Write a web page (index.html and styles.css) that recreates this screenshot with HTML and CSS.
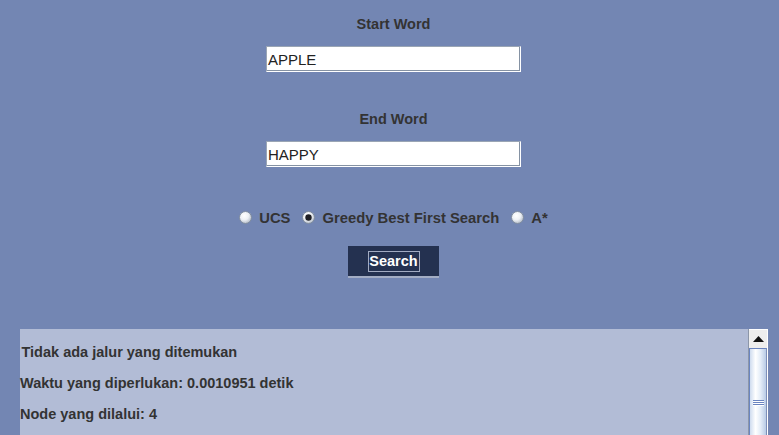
FILE: index.html
```html
<!DOCTYPE html>
<html lang="id">
<head>
<meta charset="utf-8">
<title>Word Ladder</title>
<link rel="stylesheet" href="styles.css">
</head>
<body>
<div class="app">
  <div class="form">
    <div class="label label-first">Start Word</div>
    <div class="field"><span class="field-text">APPLE</span></div>
    <div class="label label-second">End Word</div>
    <div class="field"><span class="field-text">HAPPY</span></div>

    <div class="radios">
      <label class="radio">
        <svg class="radio-icon" width="13" height="13" viewBox="0 0 13 13">
          <defs>
            <radialGradient id="rg1" cx="0.4" cy="0.35" r="0.7">
              <stop offset="0" stop-color="#ffffff"/>
              <stop offset="0.5" stop-color="#eef1f5"/>
              <stop offset="1" stop-color="#aeb7c4"/>
            </radialGradient>
          </defs>
          <circle cx="6.5" cy="6.5" r="6" fill="url(#rg1)" stroke="#7f8c9e" stroke-width="1"/>
        </svg>
        <span class="radio-text">UCS</span>
      </label>
      <label class="radio">
        <svg class="radio-icon" width="13" height="13" viewBox="0 0 13 13">
          <circle cx="6.5" cy="6.5" r="6" fill="url(#rg1)" stroke="#7f8c9e" stroke-width="1"/>
          <circle cx="6.5" cy="6.5" r="3.2" fill="#1f1f24"/>
        </svg>
        <span class="radio-text">Greedy Best First Search</span>
      </label>
      <label class="radio">
        <svg class="radio-icon" width="13" height="13" viewBox="0 0 13 13">
          <circle cx="6.5" cy="6.5" r="6" fill="url(#rg1)" stroke="#7f8c9e" stroke-width="1"/>
        </svg>
        <span class="radio-text">A*</span>
      </label>
    </div>

    <button class="search-btn" type="button"><span class="focus-ring">Search</span></button>
  </div>

  <div class="scroll-pane">
    <div class="result">
      <p class="line line-first">Tidak ada jalur yang ditemukan</p>
      <p class="line line-second">Waktu yang diperlukan: 0.0010951 detik</p>
      <p class="line line-third">Node yang dilalui: 4</p>
    </div>
    <div class="scrollbar">
      <div class="sb-up">
        <svg width="11" height="6" viewBox="0 0 11 6"><polygon points="0,6 5.5,0 11,6" fill="#111"/></svg>
      </div>
      <div class="sb-thumb">
        <div class="grip">
          <span class="grip-line"></span>
          <span class="grip-line"></span>
          <span class="grip-line"></span>
        </div>
      </div>
    </div>
  </div>
</div>
</body>
</html>
```

FILE: styles.css
```css
html, body {
  margin: 0;
  padding: 0;
}

body {
  background: #7386b3;
  width: 779px;
  height: 435px;
  overflow: hidden;
  font-family: "Liberation Sans", Arial, sans-serif;
  color: #333333;
}

.app {
  padding-left: 8px;
  display: flex;
  flex-direction: column;
}

.form {
  display: flex;
  flex-direction: column;
  align-items: center;
}

.label {
  font-size: 14.5px;
  font-weight: bold;
  line-height: 17px;
  height: 17px;
  color: #333333;
}

.label-first {
  margin-top: 16px;
}

.label-second {
  margin-top: 39px;
}

.field {
  margin-top: 13px;
  width: 255px;
  height: 26px;
  box-sizing: border-box;
  background: #ffffff;
  border-top: 1px solid #9aa5b4;
  border-left: 1px solid #9aa5b4;
  border-right: 1px solid #ffffff;
  border-bottom: 1px solid #ffffff;
  box-shadow: inset -1px -1px 0 #8592a3;
  display: flex;
  align-items: center;
  padding-left: 1px;
}

.field-text {
  font-size: 15px;
  line-height: 18px;
  color: #222222;
  padding-top: 1px;
}

.radios {
  margin-top: 42px;
  display: flex;
  align-items: center;
  gap: 12px;
  height: 18px;
}

.radio {
  display: flex;
  align-items: center;
  gap: 7px;
}

.radio-icon {
  display: block;
  margin-top: -1px;
}

.radio-text {
  font-size: 14.8px;
  font-weight: bold;
  line-height: 18px;
  color: #333333;
}

.search-btn {
  margin-top: 19px;
  width: 91px;
  height: 32px;
  box-sizing: border-box;
  padding: 0;
  border: 0;
  border-bottom: 2px solid #a3adc4;
  background: #243150;
  display: flex;
  align-items: center;
  justify-content: center;
  font-family: inherit;
  cursor: pointer;
}

.focus-ring {
  display: block;
  box-sizing: border-box;
  width: 52px;
  height: 21px;
  border: 1px solid #a2abc2;
  color: #ffffff;
  font-size: 14.5px;
  font-weight: bold;
  line-height: 19px;
  text-align: center;
}

.scroll-pane {
  margin-top: 51px;
  margin-left: 12px;
  width: 748px;
  height: 120px;
  display: flex;
}

.result {
  flex: 1;
  background: #b2bcd6;
  padding-top: 15px;
}

.line {
  margin: 0;
  font-size: 14.5px;
  font-weight: bold;
  line-height: 17px;
  height: 17px;
  color: #333333;
  white-space: nowrap;
}

.line-first {
  padding-left: 1.5px;
}

.line-second {
  margin-top: 14px;
}

.line-third {
  margin-top: 14px;
}

.scrollbar {
  width: 20px;
  display: flex;
  flex-direction: column;
  box-sizing: border-box;
  border-left: 1px solid #8c96a8;
  border-right: 1px solid #ffffff;
  background: #eeeeee;
}

.sb-up {
  height: 19px;
  box-sizing: border-box;
  border-top: 1px solid #ffffff;
  background: #eeeeee;
  display: flex;
  align-items: center;
  justify-content: center;
  padding-bottom: 1px;
}

.sb-thumb {
  flex: 1;
  box-sizing: border-box;
  border: 1px solid #6a84c0;
  border-right-color: #7d8fb8;
  background: linear-gradient(to right, #cfdcef 0%, #ffffff 35%, #e4edf8 65%, #b8cbe6 100%);
  display: flex;
  justify-content: center;
  padding-top: 51px;
}

.grip {
  display: flex;
  flex-direction: column;
  gap: 1px;
  width: 11px;
  height: 7px;
  margin-left: 1px;
}

.grip-line {
  display: block;
  height: 1px;
  background: #6a84c0;
  box-shadow: 0 1px 0 #ffffff;
}
```
